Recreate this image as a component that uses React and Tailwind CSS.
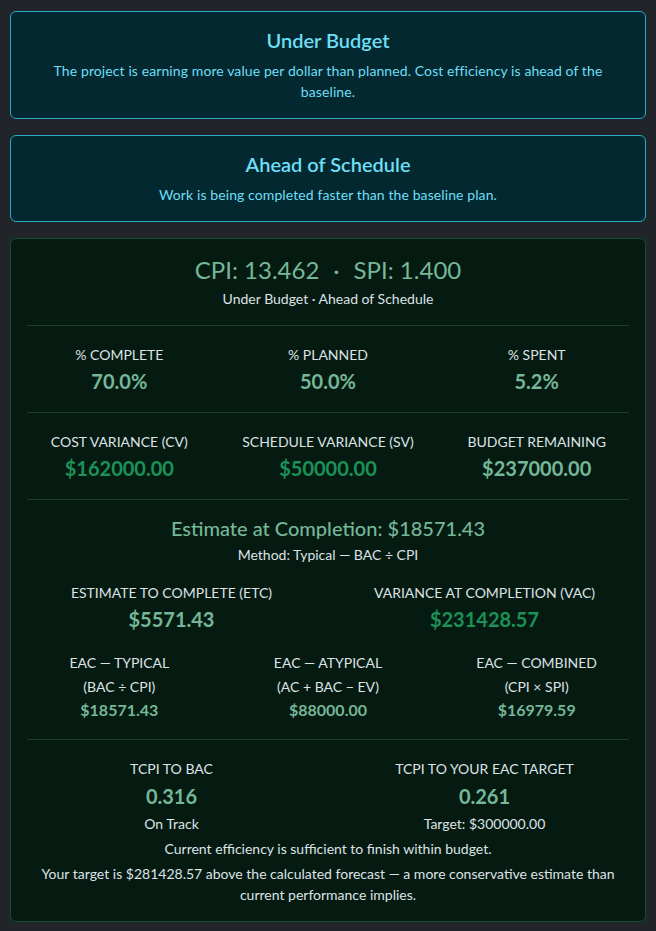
const font = { fontFamily: "Lato, 'Liberation Sans', sans-serif" };

function Notice({ title, children }) {
    return (
        <div className="rounded-md border border-[#2aa9c6] bg-[#032830] p-4 text-center text-[#6edff6]">
            <h5 className="mb-2 text-[20px] font-semibold leading-[24px]">{title}</h5>
            <p className="text-[14px] leading-[21px] tracking-[0.1px]">{children}</p>
        </div>
    )
}

function Divider() {
    return <div className="h-px bg-[#1d3d30]" />
}

function Stat({ label, value, tone = "text-[#75b798]" }) {
    return (
        <div className="px-3 text-center">
            <div className="text-[14px] uppercase leading-[21px] text-[#dee2e6]">{label}</div>
            <div className={`mt-[3px] text-[20px] font-bold leading-[27px] ${tone}`}>{value}</div>
        </div>
    )
}

function EacOption({ label, formula, value }) {
    return (
        <div className="px-3 text-center">
            <div className="text-[14px] uppercase leading-[21px] text-[#dee2e6]">{label}</div>
            <div className="mt-[3px] text-[14px] leading-[21px] text-[#dee2e6]">{formula}</div>
            <div className="mt-px text-[16px] font-bold leading-[24px] text-[#75b798]">{value}</div>
        </div>
    )
}

export default function App() {
    return (
        <div className="min-h-screen bg-[#212529] px-[10px] pt-[11px] pb-4" style={font}>
            <div className="flex flex-col gap-4">
                <Notice title="Under Budget">
                    The project is earning more value per dollar than planned. Cost efficiency is ahead of the baseline.
                </Notice>
                <Notice title="Ahead of Schedule">
                    Work is being completed faster than the baseline plan.
                </Notice>

                <div className="rounded-md border border-[#0f5132] bg-[#051b11] p-4">
                    {/* headline indices */}
                    <div className="pb-4 text-center">
                        <div className="text-[24px] leading-[29px] text-[#75b798]">
                            CPI: 13.462<span className="mx-[14px]">·</span>SPI: 1.400
                        </div>
                        <div className="mt-1 text-[14px] leading-[21px] text-[#dee2e6]">
                            Under Budget · Ahead of Schedule
                        </div>
                    </div>
                    <Divider />

                    <div className="-mx-3 grid grid-cols-3 pt-[18px] pb-[17px]">
                        <Stat label="% Complete" value="70.0%" />
                        <Stat label="% Planned" value="50.0%" />
                        <Stat label="% Spent" value="5.2%" />
                    </div>
                    <Divider />

                    <div className="-mx-3 grid grid-cols-3 pt-[18px] pb-[17px]">
                        <Stat label="Cost Variance (CV)" value="$162000.00" tone="text-[#1c9258]" />
                        <Stat label="Schedule Variance (SV)" value="$50000.00" tone="text-[#1c9258]" />
                        <Stat label="Budget Remaining" value="$237000.00" />
                    </div>
                    <Divider />

                    {/* forecast */}
                    <div className="pt-4 pb-[17px]">
                        <div className="text-center">
                            <div className="text-[20px] font-medium leading-[24px] text-[#75b798]">
                                Estimate at Completion: $18571.43
                            </div>
                            <div className="mt-1 text-[14px] leading-[21px] text-[#dee2e6]">
                                Method: Typical — BAC ÷ CPI
                            </div>
                        </div>
                        <div className="-mx-3 mt-[17px] grid grid-cols-2">
                            <Stat label="Estimate to Complete (ETC)" value="$5571.43" />
                            <Stat label="Variance at Completion (VAC)" value="$231428.57" tone="text-[#1c9258]" />
                        </div>
                        <div className="-mx-3 mt-[19px] grid grid-cols-3">
                            <EacOption label="EAC — Typical" formula="(BAC ÷ CPI)" value="$18571.43" />
                            <EacOption label="EAC — Atypical" formula="(AC + BAC − EV)" value="$88000.00" />
                            <EacOption label="EAC — Combined" formula="(CPI × SPI)" value="$16979.59" />
                        </div>
                    </div>
                    <Divider />

                    {/* to-complete performance */}
                    <div className="pt-[18px]">
                        <div className="-mx-3 grid grid-cols-2">
                            <div className="px-3 text-center">
                                <div className="text-[14px] uppercase leading-[21px] text-[#dee2e6]">TCPI to BAC</div>
                                <div className="mt-1 text-[20px] font-bold leading-[27px] text-[#75b798]">0.316</div>
                                <div className="mt-[3px] text-[14px] leading-[21px] text-[#dee2e6]">On Track</div>
                            </div>
                            <div className="px-3 text-center">
                                <div className="text-[14px] uppercase leading-[21px] text-[#dee2e6]">TCPI to your EAC target</div>
                                <div className="mt-1 text-[20px] font-bold leading-[27px] text-[#75b798]">0.261</div>
                                <div className="mt-[3px] text-[14px] leading-[21px] text-[#dee2e6]">Target: $300000.00</div>
                            </div>
                        </div>
                        <p className="mt-1 text-center text-[14px] leading-[21px] text-[#dee2e6]">
                            Current efficiency is sufficient to finish within budget.
                        </p>
                        <p className="mt-1 text-center text-[14px] leading-[21px] text-[#dee2e6]">
                            Your target is $281428.57 above the calculated forecast — a more conservative estimate than current performance implies.
                        </p>
                    </div>
                </div>
            </div>
        </div>
    )
}
